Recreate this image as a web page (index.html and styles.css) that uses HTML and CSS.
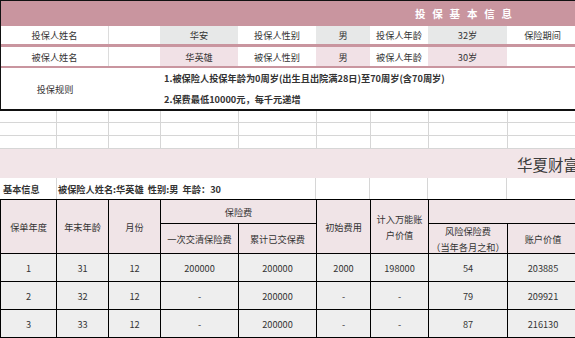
FILE: index.html
```html
<!DOCTYPE html>
<html lang="zh-CN">
<head>
<meta charset="utf-8">
<title>投保基本信息</title>
<link rel="stylesheet" href="styles.css">
</head>
<body>
<div class="sheet">
  <section class="info">
    <div class="title">投保基本信息</div>
    <div class="info-row r1">
      <div class="c vline">投保人姓名</div>
      <div class="c"></div>
      <div class="c gray">华安</div>
      <div class="c">投保人性别</div>
      <div class="c gray">男</div>
      <div class="c">投保人年龄</div>
      <div class="c gray">32岁</div>
      <div class="c">保险期间</div>
    </div>
    <div class="sep sep3"></div>
    <div class="info-row r2">
      <div class="c vline">被保人姓名</div>
      <div class="c"></div>
      <div class="c pink">华英雄</div>
      <div class="c">被保人性别</div>
      <div class="c pink">男</div>
      <div class="c">被保人年龄</div>
      <div class="c pink">30岁</div>
      <div class="c"></div>
    </div>
    <div class="sep sep2"></div>
    <div class="rules">
      <div class="rules-label">投保规则</div>
      <div class="rules-text">
        <p>1.被保险人投保年龄为0周岁(出生且出院满28日)至70周岁(含70周岁)</p>
        <p>2.保费最低10000元，每千元递增</p>
      </div>
    </div>
  </section>

  <div class="blank-grid">
    <div></div><div></div><div></div><div></div><div></div><div></div><div></div><div></div><div></div>
    <div></div><div></div><div></div><div></div><div></div><div></div><div></div><div></div><div></div>
    <div></div><div></div><div></div><div></div><div></div><div></div><div></div><div></div><div></div>
  </div>

  <div class="band">华夏财富宝两全保险（万能型）</div>

  <div class="basic-row">
    <div class="b-label">基本信息</div>
    <div class="b-text">被保险人姓名:华英雄&nbsp; 性别:男&nbsp; 年龄：30</div>
    <div></div><div></div><div></div><div></div>
  </div>

  <div class="tbl">
    <div class="h tall">保单年度</div>
    <div class="h tall">年末年龄</div>
    <div class="h tall">月份</div>
    <div class="h wide">保险费</div>
    <div class="h tall">初始费用</div>
    <div class="h tall">计入万能账<br>户价值</div>
    <div class="h wide"></div>
    <div class="h">一次交清保险费</div>
    <div class="h">累计已交保费</div>
    <div class="h">风险保险费<br>（当年各月之和）</div>
    <div class="h">账户价值</div>

    <div>1</div><div>31</div><div>12</div><div>200000</div><div>200000</div><div>2000</div><div>198000</div><div>54</div><div>203885</div>
    <div>2</div><div>32</div><div>12</div><div>-</div><div>200000</div><div>-</div><div>-</div><div>79</div><div>209921</div>
    <div>3</div><div>33</div><div>12</div><div>-</div><div>200000</div><div>-</div><div>-</div><div>87</div><div>216130</div>
  </div>
</div>
</body>
</html>
```

FILE: styles.css
```css
* { box-sizing: border-box; }

body {
  margin: 0;
  width: 575px;
  height: 338px;
  overflow: hidden;
  background: #fff;
  color: #333;
  font-family: "Noto Sans CJK SC", "Noto Sans", sans-serif;
  font-size: 9.2px;
}

.sheet {
  width: 600px;
}

/* ---- top info block ---- */
.info {
  border-top: 1px solid #111;
  border-left: 1px solid #111;
  border-bottom: 2px solid #111;
}

.title {
  height: 25px;
  background: #c9959f;
  color: #fff;
  font-weight: bold;
  font-size: 10.5px;
  letter-spacing: 6.8px;
  display: flex;
  align-items: center;
  padding-left: 414px;
}

.info-row {
  display: grid;
  grid-template-columns: 108px 51px 78px 78px 54px 58px 79px 71px;
}

.r1 { height: 18px; }
.r2 { height: 19px; }

.c {
  display: flex;
  align-items: center;
  justify-content: center;
  white-space: nowrap;
}

.vline { border-right: 1px solid #dcdcdc; }

.gray { background: #e7e8e8; }
.pink { background: #f1e1e6; }

.sep { background: #c9959f; }
.sep3 { height: 3px; }
.sep2 { height: 2px; }

.rules {
  display: grid;
  grid-template-columns: 159px 1fr;
  height: 41px;
}

.rules-label {
  display: flex;
  align-items: center;
  justify-content: center;
  padding-right: 51px;
}

.rules-text {
  padding-left: 4px;
  font-weight: bold;
  white-space: nowrap;
}

.rules-text p {
  margin: 0;
  line-height: 21px;
}

/* ---- empty gridlines ---- */
.blank-grid {
  display: grid;
  grid-template-columns: 57px 52px 52px 78px 78px 54px 58px 79px 71px;
  grid-template-rows: 12px 13px 13px;
}

.blank-grid > div {
  border-right: 1px solid #d6d6d6;
  border-bottom: 1px solid #d6d6d6;
}

/* ---- product band ---- */
.band {
  height: 29px;
  background: #f2e5e8;
  color: #3c3c3c;
  font-size: 15.5px;
  white-space: nowrap;
  overflow: hidden;
  display: flex;
  align-items: center;
  padding-left: 517px;
}

/* ---- basic info row ---- */
.basic-row {
  display: grid;
  grid-template-columns: 57px 259px 54px 58px 79px 71px;
  height: 21px;
}

.basic-row > div {
  border-right: 1px solid #d6d6d6;
  display: flex;
  align-items: center;
  white-space: nowrap;
  font-weight: bold;
}

.b-label { padding-left: 3px; }
.b-text { padding-left: 1px; }

/* ---- data table ---- */
.tbl {
  display: grid;
  grid-template-columns: 56px 52px 52px 78px 78px 54px 58px 79px 71px;
  grid-template-rows: 24px 30px 28px 28px 28px;
  border-top: 1px solid #000;
  border-left: 1px solid #000;
}

.tbl > div {
  border-right: 1px solid #000;
  border-bottom: 1px solid #000;
  display: flex;
  align-items: center;
  justify-content: center;
  text-align: center;
  line-height: 16px;
  background: #eeeeee;
  padding: 0 2px;
  white-space: nowrap;
}

.tbl > .h { background: #f0e4e7; }
.tbl > .tall { grid-row: span 2; }
.tbl > .wide { grid-column: span 2; }
```
